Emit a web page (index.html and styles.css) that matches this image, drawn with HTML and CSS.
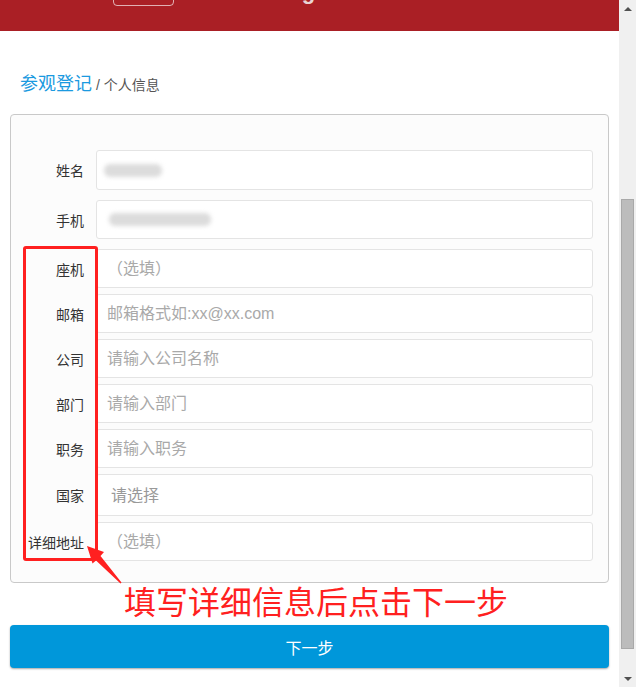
FILE: index.html
```html
<!DOCTYPE html>
<html lang="zh-CN">
<head>
	<meta charset="UTF-8">
	<title>参观登记 - 个人信息</title>
	<link rel="stylesheet" href="styles.css">
</head>
<body>
	<div class="screen">
		<div class="page">
			<header class="top">
				<div class="top-inner">
					<span class="logo"></span>
					<span class="top-title">2018 Shanghai Auto Show</span>
				</div>
			</header>
			<div class="wrap">
				<h2 class="crumb"><a href="#">参观登记</a><span>/ 个人信息</span></h2>
				<form class="panel">
					<div class="row main">
						<label>姓名</label>
						<div class="field tall"><span class="blur blur-name"></span></div>
					</div>
					<div class="row main">
						<label>手机</label>
						<div class="field"><span class="blur blur-phone"></span></div>
					</div>
					<div class="row">
						<label>座机</label>
						<input class="field" type="text" placeholder="（选填）">
					</div>
					<div class="row">
						<label>邮箱</label>
						<input class="field" type="text" placeholder="邮箱格式如:xx@xx.com">
					</div>
					<div class="row">
						<label>公司</label>
						<input class="field" type="text" placeholder="请输入公司名称">
					</div>
					<div class="row">
						<label>部门</label>
						<input class="field" type="text" placeholder="请输入部门">
					</div>
					<div class="row">
						<label>职务</label>
						<input class="field" type="text" placeholder="请输入职务">
					</div>
					<div class="row">
						<label>国家</label>
						<select class="field pick">
							<option>请选择</option>
						</select>
					</div>
					<div class="row">
						<label>详细地址</label>
						<input class="field" type="text" placeholder="（选填）">
					</div>
				</form>
				<button class="next" type="button">下一步</button>
			</div>
			<!-- screenshot annotation -->
			<div class="note-box"></div>
			<svg class="note-arrow" viewBox="0 0 50 50" width="50" height="50">
				<polygon points="7,6 24,12 20.5,16 41.5,42.5 40.5,43.5 16,20.5 12.5,23.5" fill="#ff2020"/>
			</svg>
			<p class="note-text">填写详细信息后点击下一步</p>
		</div>
		<div class="scrollbar">
			<div class="sb-btn"><i class="sb-up"></i></div>
			<div class="sb-track"><div class="sb-thumb"></div></div>
			<div class="sb-btn"><i class="sb-down"></i></div>
		</div>
	</div>
</body>
</html>
```

FILE: styles.css
```css
* {margin: 0;padding: 0;box-sizing: border-box;}
html, body {height: 100%;background: #fff;overflow: hidden;}
body {font-family: "Liberation Sans", "Noto Sans CJK SC", sans-serif;color: #333;}
a {text-decoration: none;}

.screen {display: flex;height: 687px;}
.page {position: relative;width: 619px;flex: none;}

/* header, scrolled mostly out of view */
.top {height: 31px;background: #aa1f25;overflow: hidden;}
.top-inner {display: flex;align-items: flex-end;height: 31px;padding: 0 0 25px 113px;}
.logo {width: 61px;height: 40px;flex: none;border: 1px solid rgba(255,255,255,.65);border-radius: 4px;}
.top-title {margin: 0 0 3px 19px;font-size: 22px;line-height: 22px;font-weight: bold;color: #e9d4d4;white-space: nowrap;}

.wrap {padding: 0 10px;}
.crumb {display: flex;align-items: baseline;gap: 4px;height: 83px;padding: 42px 10px 0;font-size: 18px;line-height: 22px;font-weight: normal;}
.crumb a {color: #1b9ae0;}
.crumb span {font-size: 14px;color: #555;}

.panel {border: 1px solid #c9c9c9;border-radius: 4px;background: #fcfcfc;padding: 35px 15px 15px 0;}
.row {display: grid;grid-template-columns: 85px 1fr;align-items: center;margin-bottom: 6px;}
.row.main {margin-bottom: 10px;}
.row label {text-align: right;padding-right: 12px;font-size: 14px;color: #333;}
.field {display: flex;align-items: center;width: 100%;height: 39px;padding: 0 10px;border: 1px solid #e4e4e4;border-radius: 3px;background: #fff;font-family: inherit;font-size: 16px;color: #555;outline: none;}
.field.tall {height: 40px;}
.field::placeholder {color: #a9a9a9;}
.pick {height: 42px;padding-left: 14px;color: #999;-webkit-appearance: none;appearance: none;}

.blur {display: block;height: 13px;border-radius: 6px;background: #dcdcdc;filter: blur(2px);}
.blur-name {width: 58px;margin-left: -3px;}
.blur-phone {width: 102px;margin-left: 2px;}

.next {display: block;width: 100%;height: 43px;margin-top: 42px;border: 0;border-radius: 4px;background: #0097da;box-shadow: 0 1px 2px rgba(0,0,0,.35);color: #fff;font-family: inherit;font-size: 16px;}

/* red annotation drawn over the screenshot */
.note-box {position: absolute;left: 23px;top: 246px;width: 75px;height: 315px;border: 3px solid #ff2020;border-radius: 3px;}
.note-arrow {position: absolute;left: 80px;top: 540px;}
.note-text {position: absolute;left: 124px;top: 584px;font-family: "Noto Sans CJK SC", sans-serif;font-size: 32px;line-height: 32px;color: #ff2020;white-space: nowrap;}

.scrollbar {display: flex;flex-direction: column;width: 17px;flex: none;background: #f0f0f0;}
.sb-btn {display: flex;align-items: center;justify-content: center;height: 17px;}
.sb-up, .sb-down {width: 0;height: 0;border-left: 4px solid transparent;border-right: 4px solid transparent;}
.sb-up {border-bottom: 4px solid #505050;}
.sb-down {border-top: 4px solid #505050;}
.sb-track {flex: 1;padding: 182px 2px 0;}
.sb-thumb {height: 450px;background: #bcbcbc;border: 1px solid #a9a9a9;}
```
